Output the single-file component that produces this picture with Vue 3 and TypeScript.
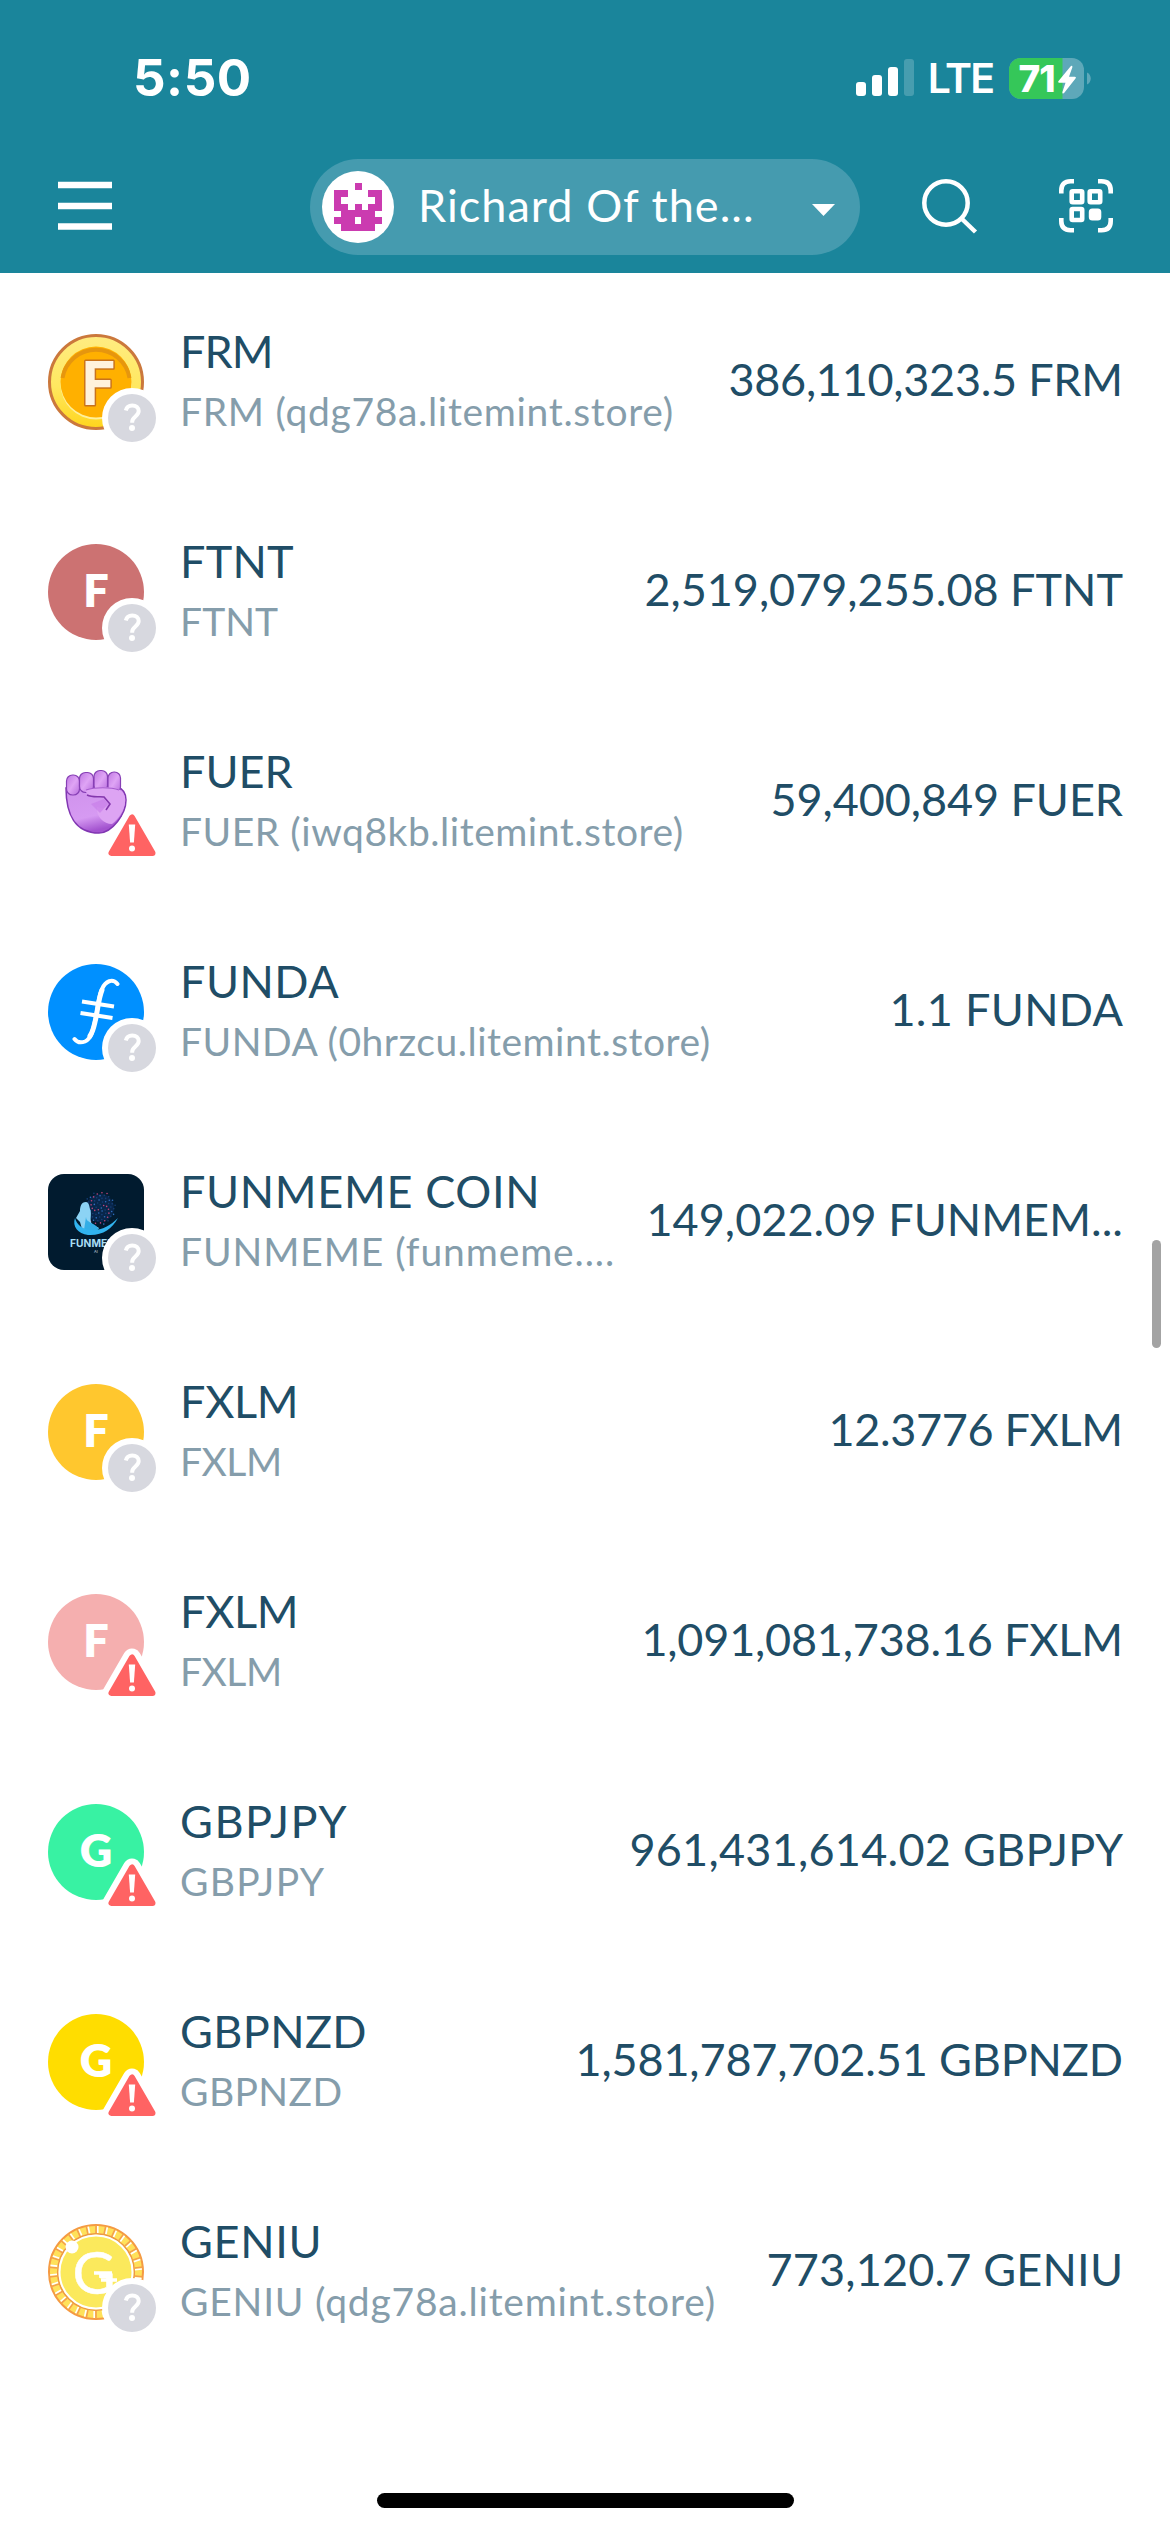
<script setup lang="ts">
import type { Directive } from 'vue'

type Badge = 'unknown' | 'danger'
type Art = 'frm' | 'fist' | 'filecoin' | 'funmeme' | 'geniu'

interface Asset {
  name: string
  nameWidth: number
  detail: string
  detailWidth: number
  amount: string
  amountWidth: number
  badge: Badge
  art?: Art
  letter?: string
  color?: string
}

const assets: Asset[] = [
  { name: 'FRM', nameWidth: 90, detail: 'FRM (qdg78a.litemint.store)', detailWidth: 490, amount: '386,110,323.5 FRM', amountWidth: 391, badge: 'unknown', art: 'frm' },
  { name: 'FTNT', nameWidth: 110, detail: 'FTNT', detailWidth: 95, amount: '2,519,079,255.08 FTNT', amountWidth: 475, badge: 'unknown', letter: 'F', color: '#cc7272' },
  { name: 'FUER', nameWidth: 109, detail: 'FUER (iwq8kb.litemint.store)', detailWidth: 500, amount: '59,400,849 FUER', amountWidth: 349, badge: 'danger', art: 'fist' },
  { name: 'FUNDA', nameWidth: 155, detail: 'FUNDA (0hrzcu.litemint.store)', detailWidth: 527, amount: '1.1 FUNDA', amountWidth: 230, badge: 'unknown', art: 'filecoin' },
  { name: 'FUNMEME COIN', nameWidth: 356, detail: 'FUNMEME (funmeme....', detailWidth: 431, amount: '149,022.09 FUNMEM...', amountWidth: 473, badge: 'unknown', art: 'funmeme' },
  { name: 'FXLM', nameWidth: 115, detail: 'FXLM', detailWidth: 99, amount: '12.3776 FXLM', amountWidth: 291, badge: 'unknown', letter: 'F', color: '#ffc72e' },
  { name: 'FXLM', nameWidth: 115, detail: 'FXLM', detailWidth: 99, amount: '1,091,081,738.16 FXLM', amountWidth: 478, badge: 'danger', letter: 'F', color: '#f5afaf' },
  { name: 'GBPJPY', nameWidth: 163, detail: 'GBPJPY', detailWidth: 141, amount: '961,431,614.02 GBPJPY', amountWidth: 490, badge: 'danger', letter: 'G', color: '#38f2a3' },
  { name: 'GBPNZD', nameWidth: 183, detail: 'GBPNZD', detailWidth: 159, amount: '1,581,787,702.51 GBPNZD', amountWidth: 544, badge: 'danger', letter: 'G', color: '#ffdd00' },
  { name: 'GENIU', nameWidth: 138, detail: 'GENIU (qdg78a.litemint.store)', detailWidth: 532, amount: '773,120.7 GENIU', amountWidth: 353, badge: 'unknown', art: 'geniu' },
]

const identicon = ['...#...', '##...##', '#.....#', '##.#.##', '.#####.', '###.###', '.#####.']
const pixels = identicon.flatMap((row, y) =>
  [...row].flatMap((c, x) => (c === '#' ? [{ x, y }] : [])),
)

const spokes = Array.from({ length: 30 }, (_, i) => i * 12)
const dots = Array.from({ length: 70 }, (_, i) => {
  const r = 15.5 * Math.sqrt((i + 0.5) / 70)
  const a = i * 2.39996
  return {
    x: 52 + r * Math.cos(a),
    y: 34 + r * 1.1 * Math.sin(a),
    c: i % 4 === 1 ? '#c2447c' : i % 3 === 0 ? '#2f6fc0' : '#153f78',
  }
})

// Tracks a label so that its glyphs span the given number of pixels.
const vFit: Directive<HTMLElement, number> = {
  mounted(el, { value }) {
    const size = parseFloat(getComputedStyle(el).fontSize)
    const gaps = (el.textContent ?? '').length - 1
    const spacing = (value + size * 0.08 - el.getBoundingClientRect().width) / gaps
    el.style.letterSpacing = `${spacing}px`
    el.style.marginRight = `${-spacing}px`
  },
}
</script>

<template>
  <div class="screen">
    <header class="header">
      <div class="status">
        <span class="clock">5:50</span>
        <div class="status-right">
          <svg class="signal" width="58" height="38" viewBox="0 0 58 38" fill="#fff">
            <rect x="0" y="23" width="10" height="14" rx="3" />
            <rect x="16" y="16" width="10" height="21" rx="3" />
            <rect x="32" y="8" width="10" height="29" rx="3" />
            <rect x="48" y="0" width="10" height="37" rx="3" opacity=".2" />
          </svg>
          <span class="lte">LTE</span>
          <svg class="battery" width="82" height="53" viewBox="0 -6 82 53">
            <defs><clipPath id="cell"><rect width="75" height="41" rx="12" /></clipPath></defs>
            <g clip-path="url(#cell)">
              <rect width="75" height="41" fill="#5ea8b9" />
              <rect width="53.5" height="41" fill="#35c759" />
            </g>
            <path d="M78 14.5c5 2 5 10 0 12z" fill="#5ea8b9" />
            <text x="27.5" y="34" text-anchor="middle" class="charge">71</text>
            <path d="M61.5 8.5 49.5 23c-.7 1-.3 1.7.7 1.7h6.3l-3 9c-.5 2 .7 2.400 1.800 1L66.500 20.500c.800-1 .4-1.700-.7-1.700H60l3.300-9.300c.5-1.700-.8-2.200-1.800-1z" fill="#fff" />
          </svg>
        </div>
      </div>
      <div class="toolbar">
        <svg class="menu" width="54" height="50" viewBox="0 0 54 50" stroke="#fff" stroke-width="6.400">
          <path d="M0 4h54M0 25h54M0 45.500h54" />
        </svg>
        <div class="account">
          <svg class="account-icon" width="72" height="72" viewBox="0 0 72 72" shape-rendering="crispEdges">
            <circle cx="36" cy="36" r="36" fill="#fff" shape-rendering="auto" />
            <rect v-for="p in pixels" :key="`${p.x}-${p.y}`" :x="12 + p.x * 6.86" :y="12 + p.y * 6.86" width="7" height="7" fill="#cb3bb0" />
          </svg>
          <span v-fit="332" class="account-name">Richard Of the...</span>
          <svg class="caret" width="23" height="12" viewBox="0 0 23 12"><path d="M0 0h23L11.500 12z" fill="#fff" /></svg>
        </div>
        <svg class="search" width="58" height="58" viewBox="0 0 58 58" fill="none" stroke="#fff" stroke-width="4.500">
          <circle cx="25" cy="25" r="21.700" />
          <path d="M40.500 40.500 54.500 54" />
        </svg>
        <svg class="scan" width="54" height="54" viewBox="0 0 54 54" fill="none" stroke="#fff" stroke-width="4.600">
          <path d="M2.300 14.500v-3q0-9.200 9.200-9.200h3.500M39 2.300h3.500q9.200 0 9.200 9.200v3M51.700 39v3q0 9.200-9.200 9.200H39M15 51.200h-3.500q-9.200 0-9.200-9.200v-3" />
          <rect x="12.700" y="12.200" width="10.500" height="11" rx="1" />
          <rect x="30.700" y="12.200" width="10.500" height="11" rx="1" />
          <rect x="12.700" y="30" width="10.500" height="11" rx="1" />
          <rect x="29.800" y="29.500" width="12.500" height="12" rx="3.500" fill="#fff" stroke="none" />
        </svg>
      </div>
    </header>

    <main class="list">
      <div v-for="(a, i) in assets" :key="i" class="row">
        <div class="avatar">
          <div v-if="a.letter" class="letter" :style="{ background: a.color }">{{ a.letter }}</div>

          <svg v-else-if="a.art === 'frm'" width="96" height="96" viewBox="0 0 96 96">
            <defs>
              <linearGradient id="rim" x1="0" y1="0" x2="0" y2="1">
                <stop offset="0" stop-color="#ffec82" /><stop offset=".55" stop-color="#ffe860" /><stop offset="1" stop-color="#ffd51c" />
              </linearGradient>
            </defs>
            <circle cx="48" cy="48" r="46.500" fill="url(#rim)" stroke="#cb783c" stroke-width="3" />
            <circle cx="48" cy="50" r="35.500" fill="#fff09a" />
            <circle cx="48" cy="48" r="35.500" fill="#ffb000" />
            <path d="M14.500 44a34 34 0 0 1 67 0" fill="none" stroke="#e6960e" stroke-width="4" />
            <text x="50" y="70.500" text-anchor="middle" class="coin-f">F</text>
          </svg>

          <svg v-else-if="a.art === 'fist'" width="96" height="96" viewBox="0 0 96 96">
            <defs>
              <linearGradient id="skin" x1="0" y1="0" x2=".3" y2="1">
                <stop offset="0" stop-color="#cf92ec" /><stop offset=".7" stop-color="#d69af2" /><stop offset="1" stop-color="#a353cf" />
              </linearGradient>
              <linearGradient id="finger" x1="0" y1="0" x2="1" y2="1">
                <stop offset="0" stop-color="#c077e2" /><stop offset=".5" stop-color="#dfa4f5" /><stop offset="1" stop-color="#b76ddd" />
              </linearGradient>
            </defs>
            <path d="M18 34c0 26 9 45 33 45 13 0 27-19 27-33 0-6-3-11-8-13z" fill="url(#skin)" stroke="#8136b2" stroke-width="1.500" />
            <g fill="url(#finger)" stroke="#8740b5" stroke-width="1.200">
              <rect x="18.500" y="21" width="13" height="20" rx="6" />
              <rect x="31.500" y="18.500" width="14" height="20" rx="6" />
              <rect x="46" y="16.500" width="13.500" height="21" rx="6" />
              <rect x="60" y="18" width="12.500" height="21" rx="6" />
            </g>
            <path d="M40 35c9-2 25-3 32 1 4 3 6 7 5 13-1 7-7 17-13 21-8 0-16-7-15-17 5 2 9 1 13-3l-7-7c-7 1-15-1-17-5-1-2 0-3 2-3z" fill="#dda4f3" />
            <path d="M39 41c6 3 13 1 17 2l6 7-4 6" fill="none" stroke="#8437ad" stroke-width="1.600" />
            <path d="M38 36c9-3 25-3 33 0" fill="none" stroke="#a65bce" stroke-width="1.200" />
            <path d="M43 50l13-5 4 5-8 9z" fill="#c77be7" opacity=".6" />
          </svg>

          <svg v-else-if="a.art === 'filecoin'" width="96" height="96" viewBox="0 0 96 96" fill="none" stroke="#fff" stroke-linecap="round">
            <circle cx="48" cy="48" r="48" fill="#0090ff" stroke="none" />
            <path d="M69.500 20c-5-6-12-3-15.500 5-4 9-4 20-7 32-2 9-4 18-10 20.500-4 1.500-8 .8-10.500-2.500" stroke-width="4" />
            <path d="M54 26c-4 10-4 20-7 32-1.500 7-3 11-5 14" stroke-width="5" />
            <path d="M34 37.500l32 5M32.500 49l32 5" stroke-width="4" stroke-linecap="butt" />
          </svg>

          <svg v-else-if="a.art === 'funmeme'" width="96" height="96" viewBox="0 0 96 96">
            <rect width="96" height="96" rx="16" fill="#011b2f" />
            <circle cx="52" cy="34" r="14" fill="#0b2b56" opacity=".7" />
            <circle v-for="(d, n) in dots" :key="n" :cx="d.x" :cy="d.y" r=".8" :fill="d.c" />
            <path d="M38 28c-5 0-6 5-6 9l-4 7 4 4 2 7 12 4 5-5c-3-2-7-2-8-6s1-9-1-13c-.7-3-1-7-4-7z" fill="#8cd3f4" />
            <path d="M38 43c0 6 8 5 13 12l-8 4-7-3z" fill="#33aee6" />
            <path d="M27 44c-3 8 3 16 13 17 14 1 24-6 30-17-8 8-17 13-28 12-8-1-13-5-15-12z" fill="#31b4ef" />
            <text x="22" y="73" class="meme-word" textLength="53" lengthAdjust="spacingAndGlyphs">FUNMEME</text>
            <text x="46" y="79" class="meme-sub">AI</text>
          </svg>

          <svg v-else width="96" height="96" viewBox="0 0 96 96">
            <circle cx="48" cy="48" r="47" fill="#ffe15a" stroke="#f59a42" stroke-width="2" />
            <g stroke="#f4a04c" stroke-width="1.600">
              <g v-for="s in spokes" :key="s" :transform="`rotate(${s} 48 48)`">
                <path d="M48 1v8" /><path d="M49.800 2v7" stroke="#fff" />
              </g>
            </g>
            <circle cx="48" cy="48" r="38.300" fill="#fbe95c" stroke="#ee9645" stroke-width="1.500" />
            <circle cx="48" cy="48" r="36.500" fill="none" stroke="#fff" stroke-width="2" />
            <circle cx="24" cy="23" r="6.500" fill="#fff" />
            <text x="46" y="69.500" text-anchor="middle" class="coin-g">G</text>
            <path d="M46 49h18M53 56h16M60 49v14" stroke="#fff" stroke-width="3.500" />
          </svg>

          <svg v-if="a.badge === 'unknown'" class="badge" width="60" height="60" viewBox="0 0 60 60">
            <circle cx="30" cy="30" r="30" fill="#fff" />
            <circle cx="30" cy="30" r="24" fill="#d7d8df" />
            <path d="M23.800 22.500c.8-3.500 3.200-5 6.400-5 4 0 6.500 2.300 6.500 5.600 0 5.400-6.500 5.400-6.500 10.700v.9" fill="none" stroke="#fff" stroke-width="4" />
            <circle cx="30" cy="40" r="3" fill="#fff" />
          </svg>
          <svg v-else class="badge" width="60" height="60" viewBox="0 0 60 60" stroke-linejoin="round">
            <path d="M30 9.500 9.500 45h41z" fill="#fff" stroke="#fff" stroke-width="18" />
            <path d="M30 9.500 9.500 45h41z" fill="#ff6363" stroke="#ff6363" stroke-width="6" />
            <path d="M26.800 16.500h6.400l-1.300 18h-3.800z" fill="#fff" />
            <circle cx="30" cy="40.500" r="3" fill="#fff" />
          </svg>
        </div>

        <div class="labels">
          <div class="line"><span v-fit="a.nameWidth" class="name">{{ a.name }}</span></div>
          <div class="line"><span v-fit="a.detailWidth" class="detail">{{ a.detail }}</span></div>
        </div>
        <span v-fit="a.amountWidth" class="amount">{{ a.amount }}</span>
      </div>
    </main>
    <div class="scroll-thumb"></div>
    <div class="home-indicator"></div>
  </div>
</template>

<style>
body {
  margin: 0;
  background: #fff;
}
</style>

<style scoped>
.screen {
  position: relative;
  width: 1170px;
  height: 2532px;
  overflow: hidden;
  background: #fff;
  font-family: Lato, "Open Sans", sans-serif;
  color: #204d66;
}
svg {
  display: block;
  flex: none;
}
span {
  display: inline-block;
  white-space: nowrap;
}
.header {
  height: 273px;
  box-sizing: border-box;
  background: #1a859b;
  color: #fff;
}
.status {
  height: 159px;
  padding: 0 79px 3px 133px;
  display: flex;
  justify-content: space-between;
  align-items: center;
  box-sizing: border-box;
}
.clock {
  font: 700 51px/60px Inter, sans-serif;
  letter-spacing: 0.5px;
}
.status-right {
  display: flex;
  align-items: center;
}
.lte {
  margin: 0 16px 0 14px;
  font: 600 41px/50px Inter, sans-serif;
  letter-spacing: -2px;
}
.charge {
  font: 800 37px Inter, sans-serif;
  letter-spacing: -1px;
  fill: #fff;
}
.toolbar {
  height: 96px;
  display: flex;
  align-items: center;
}
.menu {
  margin: -3px 198px 0 58px;
}
.account {
  width: 550px;
  height: 96px;
  display: flex;
  align-items: center;
  box-sizing: border-box;
  padding: 0 25px 0 12px;
  border-radius: 48px;
  background: #459baf;
}
.account-name {
  margin-left: 24px;
  font-size: 45px;
  line-height: 60px;
  padding-bottom: 5px;
}
.caret {
  margin: 6px 0 0 auto;
}
.search {
  margin-left: 61px;
}
.scan {
  margin: -2px 0 0 80px;
}
.list {
  padding-top: 4px;
}
.row {
  height: 210px;
  padding: 0 47px 0 48px;
  display: flex;
  align-items: center;
}
.avatar {
  position: relative;
  width: 96px;
  height: 96px;
  flex: none;
}
.letter {
  height: 96px;
  border-radius: 50%;
  text-align: center;
  color: #fff;
  font-size: 45px;
  font-weight: 800;
  line-height: 92px;
}
.badge {
  position: absolute;
  left: 54px;
  top: 54px;
}
.labels {
  flex: 1;
  min-width: 0;
  margin-left: 36px;
  padding-bottom: 2px;
}
.line {
  height: 60px;
  line-height: 60px;
}
.name,
.amount {
  font-size: 45px;
  line-height: 60px;
}
.detail {
  font-size: 39px;
  line-height: 60px;
  color: #859dab;
}
.line span {
  vertical-align: top;
}
.amount {
  padding-bottom: 6px;
}
.coin-f {
  font: 900 60px Lato, sans-serif;
  fill: #fff2dc;
  stroke: #c8721c;
  stroke-width: 3px;
  stroke-linejoin: round;
  paint-order: stroke;
}
.coin-g {
  font: 400 59px Lato, sans-serif;
  fill: #fff;
  stroke: #fff;
  stroke-width: 0.5px;
}
.meme-word {
  font: 700 10px Inter, sans-serif;
  fill: #a9def5;
}
.meme-sub {
  font: 4px Inter, sans-serif;
  fill: #c4d4dd;
}
.scroll-thumb {
  position: absolute;
  left: 1152px;
  top: 1240px;
  width: 9px;
  height: 108px;
  border-radius: 5px;
  background: #a3a3a3;
}
.home-indicator {
  position: absolute;
  left: 377px;
  top: 2493px;
  width: 417px;
  height: 15px;
  border-radius: 8px;
  background: #000;
}
</style>
